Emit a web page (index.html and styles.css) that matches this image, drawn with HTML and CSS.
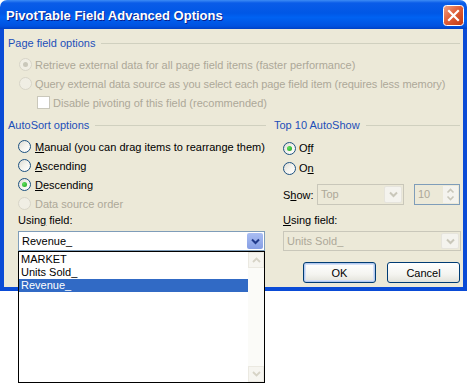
FILE: index.html
```html
<!DOCTYPE html>
<html lang="en">
<head>
    <meta charset="UTF-8">
    <title>PivotTable Field Advanced Options</title>
    <link rel="stylesheet" href="styles.css">
</head>
<body>
    <div class="window">
        <div class="titlebar">
            <span class="title">PivotTable Field Advanced Options</span>
            <div class="close">
                <svg width="21" height="21" viewBox="0 0 21 21">
                    <defs>
                        <linearGradient id="closeFill" x1="0" y1="0" x2="1" y2="1">
                            <stop offset="0" stop-color="#f0a58a"/>
                            <stop offset="0.45" stop-color="#e0603a"/>
                            <stop offset="1" stop-color="#c03810"/>
                        </linearGradient>
                    </defs>
                    <rect x="0.5" y="0.5" width="20" height="20" rx="3" fill="url(#closeFill)" stroke="#fff"/>
                    <path d="M6 6 L15 15 M15 6 L6 15" stroke="#fff" stroke-width="2.2" stroke-linecap="square"/>
                </svg>
            </div>
        </div>
        <div class="client">
            <div class="legend"><span>Page field options</span><i class="rule"></i></div>
            <div class="page-opts">
                <div class="opt off"><span class="radio dot"></span><span>Retrieve external data for all page field items (faster performance)</span></div>
                <div class="opt off"><span class="radio"></span><span class="tight">Query external data source as you select each page field item (requires less memory)</span></div>
                <div class="opt off sub"><span class="check"></span><span>Disable pivoting of this field (recommended)</span></div>
            </div>
            <div class="columns">
                <div class="col-left">
                    <div class="legend"><span>AutoSort options</span><i class="rule"></i></div>
                    <div class="sort-opts">
                        <div class="opt"><span class="radio"></span><span><u>M</u>anual (you can drag items to rearrange them)</span></div>
                        <div class="opt"><span class="radio"></span><span><u>A</u>scending</span></div>
                        <div class="opt"><span class="radio dot"></span><span><u>D</u>escending</span></div>
                        <div class="opt off"><span class="radio"></span><span>Data source order</span></div>
                    </div>
                    <div class="field-label">Usin<u>g</u> field:</div>
                    <div class="combo open">
                        <span class="val">Revenue_</span>
                        <span class="drop">
                            <svg width="9" height="7" viewBox="0 0 9 7"><path d="M1 1.5 L4.5 5 L8 1.5" fill="none" stroke="#213a8a" stroke-width="2"/></svg>
                        </span>
                    </div>
                </div>
                <div class="col-right">
                    <div class="legend"><span>Top 10 AutoShow</span><i class="rule"></i></div>
                    <div class="top-opts">
                        <div class="opt"><span class="radio dot"></span><span>O<u>f</u>f</span></div>
                        <div class="opt"><span class="radio"></span><span>O<u>n</u></span></div>
                    </div>
                    <div class="show-row">
                        <span class="show-label">S<u>h</u>ow:</span>
                        <div class="combo dim top">
                            <span class="val">Top</span>
                            <span class="drop">
                                <svg width="9" height="7" viewBox="0 0 9 7"><path d="M1 1.5 L4.5 5 L8 1.5" fill="none" stroke="#c9c7ba" stroke-width="2"/></svg>
                            </span>
                        </div>
                        <div class="spin">
                            <span class="val">10</span>
                            <span class="arrows">
                                <svg width="9" height="6" viewBox="0 0 9 6"><path d="M1.5 4.5 L4.5 1.5 L7.5 4.5" fill="none" stroke="#c9c7ba" stroke-width="1.6"/></svg>
                                <svg width="9" height="6" viewBox="0 0 9 6"><path d="M1.5 1.5 L4.5 4.5 L7.5 1.5" fill="none" stroke="#c9c7ba" stroke-width="1.6"/></svg>
                            </span>
                        </div>
                    </div>
                    <div class="field-label"><u>U</u>sing field:</div>
                    <div class="combo dim using">
                        <span class="val">Units Sold_</span>
                        <span class="drop">
                            <svg width="9" height="7" viewBox="0 0 9 7"><path d="M1 1.5 L4.5 5 L8 1.5" fill="none" stroke="#c9c7ba" stroke-width="2"/></svg>
                        </span>
                    </div>
                    <div class="buttons">
                        <button class="btn default">OK</button>
                        <button class="btn">Cancel</button>
                    </div>
                </div>
            </div>
        </div>
    </div>

    <div class="dropdown">
        <div class="items">
            <div class="item">MARKET</div>
            <div class="item">Units Sold_</div>
            <div class="item selected">Revenue_</div>
        </div>
        <div class="scroll">
            <span class="sbtn">
                <svg width="9" height="6" viewBox="0 0 9 6"><path d="M1 5 L4.5 1.5 L8 5" fill="none" stroke="#d6d3c6" stroke-width="1.8"/></svg>
            </span>
            <span class="sbtn">
                <svg width="9" height="6" viewBox="0 0 9 6"><path d="M1 1 L4.5 4.5 L8 1" fill="none" stroke="#d6d3c6" stroke-width="1.8"/></svg>
            </span>
        </div>
    </div>
</body>
</html>
```

FILE: styles.css
```css
body {
    margin: 0;
    padding: 0;
    background-color: #fff;
    font-family: "Liberation Sans", Arial, sans-serif;
    font-size: 11px;
    color: #000;
}

.window {
    width: 467px;
}

.titlebar {
    height: 29px;
    display: flex;
    align-items: center;
    justify-content: space-between;
    padding: 0 3px 0 6px;
    box-sizing: border-box;
    border-radius: 7px 7px 0 0;
    background: linear-gradient(#3d8cf5 0, #0a5ce8 3px, #0057e6 45%, #0062f2 60%, #0052e0 90%, #0041c4 100%);
}

.title {
    color: #fff;
    font-weight: bold;
    font-size: 13px;
    text-shadow: 1px 1px #0a1e8a;
    margin-top: 1px;
}

.close {
    width: 21px;
    height: 21px;
    margin-top: 2px;
}

.client {
    background-color: #ece9d8;
    border: 4px solid #0a4bd6;
    border-top: 0;
    padding: 7px 3px 4px 4px;
}

.legend {
    display: flex;
    align-items: center;
    height: 14px;
    color: #1d4fb8;
}

.legend .rule {
    flex: 1;
    height: 1px;
    margin-left: 6px;
    background-color: #d0d0bf;
}

.opt {
    display: flex;
    align-items: center;
    height: 19px;
    gap: 4px;
}

.opt.off {
    color: #aca899;
}

.tight {
    letter-spacing: -0.08px;
}

.radio {
    width: 11px;
    height: 11px;
    border: 1px solid #1c5180;
    border-radius: 50%;
    background: linear-gradient(135deg, #dcdbd3 0%, #f4f3ee 50%, #fff 100%);
    display: flex;
    align-items: center;
    justify-content: center;
}

.radio.dot::after {
    content: "";
    width: 5px;
    height: 5px;
    border-radius: 50%;
    background: radial-gradient(circle at 35% 35%, #5ce05a, #21a121);
}

.off .radio {
    border-color: #d8d5c8;
    background: #f0eee4;
}

.off .radio.dot::after {
    background: #cac8bb;
}

.check {
    width: 11px;
    height: 11px;
    border: 1px solid #cac8bb;
    background-color: #fff;
}

.page-opts {
    margin-top: 5px;
    padding-left: 11px;
}

.page-opts .opt {
    gap: 3px;
}

.page-opts .opt.sub {
    padding-left: 18px;
}

.columns {
    display: grid;
    grid-template-columns: 258px 186px;
    gap: 8px;
    margin-top: 6px;
}

.sort-opts {
    margin-top: 5px;
    padding-left: 10px;
}

.field-label {
    height: 14px;
    line-height: 14px;
    padding-left: 10px;
}

.combo {
    display: flex;
    height: 20px;
    box-sizing: border-box;
    border: 1px solid #7f9db9;
    background-color: #fff;
    margin-top: 4px;
}

.col-left .combo {
    margin-left: 10px;
    width: 247px;
}

.combo .val {
    flex: 1;
    padding-left: 3px;
    line-height: 18px;
}

.combo .drop {
    width: 16px;
    margin: 1px;
    border-radius: 2px;
    display: flex;
    align-items: center;
    justify-content: center;
}

.combo.open .drop {
    background: linear-gradient(#a9bdf2, #869ee4);
}

.combo.dim {
    border-color: #c9c7ba;
    background-color: #ece9d8;
    color: #aca899;
}

.combo.dim .drop {
    background-color: #f4f3ee;
    border: 1px solid #e6e4dc;
}

.top-opts {
    margin-top: 6px;
    padding-left: 9px;
}

.top-opts .opt {
    height: 20px;
    gap: 3px;
}

.show-row {
    display: flex;
    align-items: center;
    margin-top: 6px;
    padding-left: 9px;
    height: 21px;
}

.show-label {
    width: 34px;
}

.combo.top {
    width: 87px;
    height: 21px;
    margin: 0 10px 0 0;
}

.spin {
    display: flex;
    width: 46px;
    height: 21px;
    box-sizing: border-box;
    border: 1px solid #7f9db9;
    color: #aca899;
}

.spin .val {
    flex: 1;
    padding-left: 3px;
    line-height: 19px;
}

.spin .arrows {
    width: 15px;
    margin: 1px;
    background-color: #f4f3ee;
    display: flex;
    flex-direction: column;
    align-items: center;
    justify-content: center;
    gap: 1px;
}

.col-right .field-label {
    margin-top: 8px;
    padding-left: 9px;
}

.combo.using {
    margin-left: 9px;
    width: 178px;
}

.buttons {
    display: flex;
    justify-content: flex-end;
    gap: 11px;
    margin-top: 11px;
}

.btn {
    width: 73px;
    height: 21px;
    font-family: inherit;
    font-size: 11px;
    color: #000;
    border: 1px solid #003c74;
    border-radius: 3px;
    background: linear-gradient(#fff, #f4f4f0 60%, #e3e2da);
    padding: 0;
}

.btn.default {
    box-shadow: inset 0 0 0 1px #b3c9ef, inset 0 0 0 2px #d4e0f6;
}

.dropdown {
    position: absolute;
    left: 18px;
    top: 251px;
    width: 247px;
    height: 132px;
    box-sizing: border-box;
    border: 1px solid #000;
    background-color: #fff;
    display: flex;
}

.items {
    flex: 1;
    padding-top: 1px;
}

.item {
    height: 13px;
    line-height: 13px;
    padding-left: 2px;
    font-size: 11px;
}

.item.selected {
    background-color: #316ac5;
    color: #fff;
}

.scroll {
    width: 16px;
    background-color: #fbfbf8;
    display: flex;
    flex-direction: column;
    justify-content: space-between;
}

.sbtn {
    height: 16px;
    background-color: #f6f5f0;
    border: 1px solid #ebe9e1;
    box-sizing: border-box;
    display: flex;
    align-items: center;
    justify-content: center;
}
```
